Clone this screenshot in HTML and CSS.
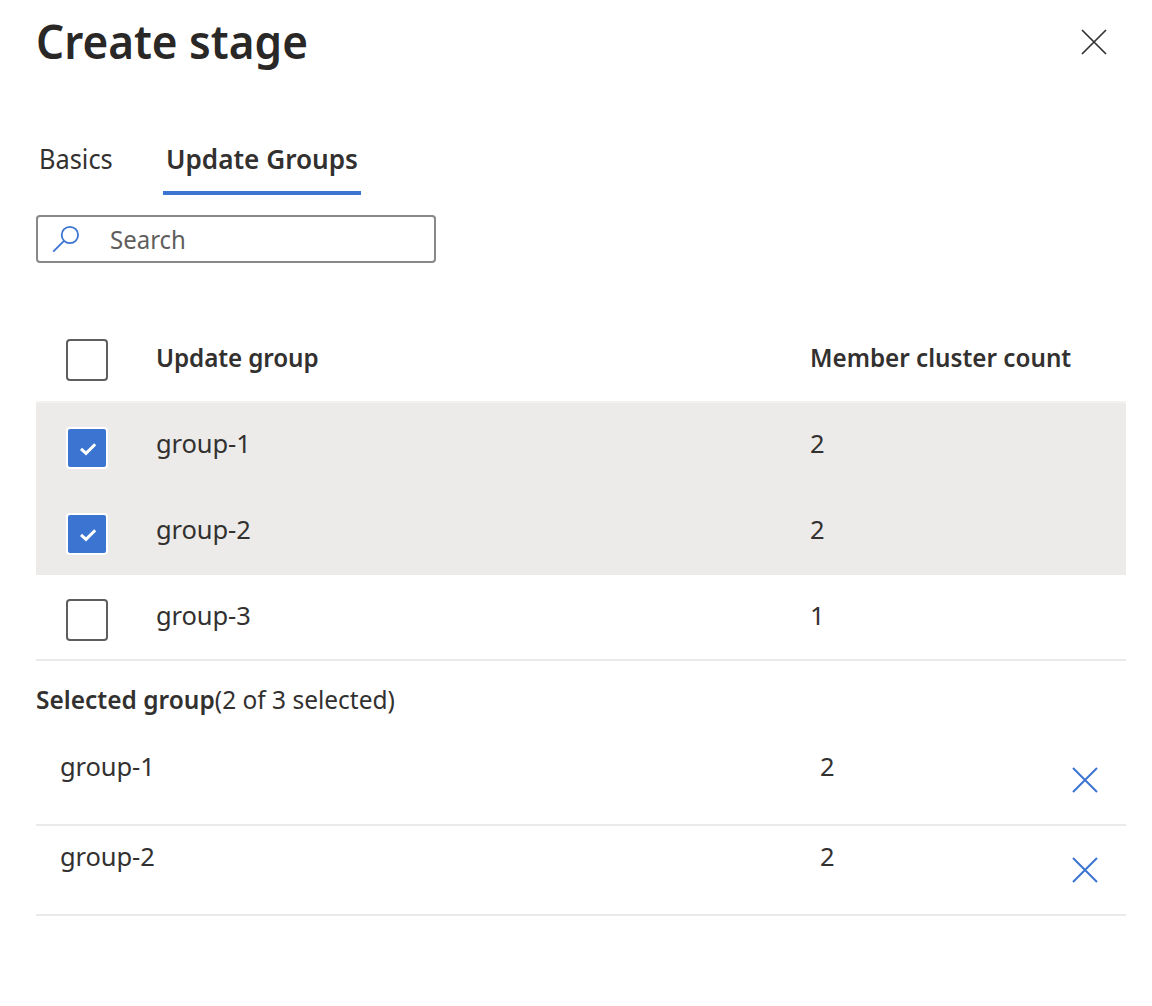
FILE: index.html
```html
<!DOCTYPE html>
<html lang="en">
<head>
<meta charset="utf-8">
<title>Create stage</title>
<link rel="stylesheet" href="styles.css">
</head>
<body>
<main class="panel">
  <header class="panel-header">
    <h1 class="title"><span class="fit fit-title">Create stage</span></h1>
    <button class="icon-button close" aria-label="Close"><svg class="cross" viewBox="0 0 26 26"><path d="M1 1L25 25M25 1L1 25"/></svg></button>
  </header>
  <nav class="tabs">
    <a class="tab"><span class="fit fit-basics">Basics</span></a>
    <a class="tab active"><span class="fit fit-strong">Update Groups</span></a>
  </nav>
  <div class="search">
    <svg class="search-icon" viewBox="0 0 28 28"><circle cx="17.9" cy="10" r="8.2"/><path d="M12 15.8L1.2 26.6"/></svg>
    <span class="fit fit-search">Search</span>
  </div>
  <section class="table">
    <div class="row head">
      <span class="checkbox"></span>
      <span class="name"><span class="fit fit-strong">Update group</span></span>
      <span class="count"><span class="fit fit-strong">Member cluster count</span></span>
    </div>
    <div class="row selected">
      <span class="checkbox checked"><svg class="tick" viewBox="0 0 18 14"><path d="M2 6.8L7 11.4L16.2 2.2"/></svg></span>
      <span class="name">group-1</span>
      <span class="count">2</span>
    </div>
    <div class="row selected">
      <span class="checkbox checked"><svg class="tick" viewBox="0 0 18 14"><path d="M2 6.8L7 11.4L16.2 2.2"/></svg></span>
      <span class="name">group-2</span>
      <span class="count">2</span>
    </div>
    <div class="row last">
      <span class="checkbox"></span>
      <span class="name">group-3</span>
      <span class="count">1</span>
    </div>
  </section>
  <h2 class="summary"><span class="fit fit-summary"><strong>Selected group</strong>(2 of 3 selected)</span></h2>
  <section class="picked">
    <div class="picked-row">
      <span class="name">group-1</span>
      <span class="count">2</span>
      <button class="icon-button remove" aria-label="Remove group-1"><svg class="cross" viewBox="0 0 26 26"><path d="M1 1L25 25M25 1L1 25"/></svg></button>
    </div>
    <div class="picked-row">
      <span class="name">group-2</span>
      <span class="count">2</span>
      <button class="icon-button remove" aria-label="Remove group-2"><svg class="cross" viewBox="0 0 26 26"><path d="M1 1L25 25M25 1L1 25"/></svg></button>
    </div>
  </section>
</main>
</body>
</html>
```
FILE: styles.css
```css
* { box-sizing: border-box; }
body {
  margin: 0;
  background: #fff;
  color: #323130;
  font: 400 25.5px/36px "Noto Sans", "Open Sans", sans-serif;
}
strong { font-weight: 600; }
.panel { width: 1152px; height: 1006px; padding: 0 26px 0 36px; overflow: hidden; }
.panel-header { display: flex; justify-content: space-between; height: 139px; }
.title {
  margin: 9px 0 0;
  font-size: 47px;
  line-height: 64px;
  font-weight: 600;
  color: #292827;
  white-space: nowrap;
}
/* Slightly narrowed lettering for headings and labels */
.fit { display: inline-block; transform-origin: 0 50%; white-space: nowrap; }
.fit-title { transform: scaleX(.938); }
.fit-basics { transform: scaleX(.922); }
.fit-strong { transform: scaleX(.95); }
.fit-search { transform: scaleX(.94); }
.fit-summary { transform: scaleX(.96); }
.icon-button { padding: 0; border: 0; background: none; width: 26px; height: 26px; }
.cross { display: block; width: 26px; height: 26px; fill: none; stroke: currentColor; stroke-width: 1.7; }
.close { margin: 29px 19px 0 0; color: #323130; }
.remove .cross { stroke-width: 2; }
.tabs { display: flex; gap: 48px; height: 56px; font-size: 27.5px; line-height: 40px; }
.tab { padding: 0 3px; white-space: nowrap; }
.tab:first-child { width: 79px; }
.tab.active { width: 198px; border-bottom: 4px solid #3b74d1; font-weight: 600; }
.search {
  display: flex;
  width: 400px;
  height: 48px;
  margin-top: 20px;
  padding: 4px 14px;
  border: 2px solid #8a8886;
  border-radius: 4px;
  color: #605e5c;
}
.search-icon { width: 28px; height: 28px; margin: 4px 30px 0 0; fill: none; stroke: #3b74d1; stroke-width: 1.8; }
.table { margin-top: 54px; }
.row {
  display: grid;
  grid-template-columns: 42px 606px 1fr;
  column-gap: 48px;
  height: 86px;
  padding: 22px 0 0 30px;
  align-items: start;
}
.head { border-bottom: 2px solid #f3f2f1; font-weight: 600; }
.selected { background: #edebe9; }
.last { border-bottom: 2px solid #eaeaea; }
.name, .count { white-space: nowrap; }
.checkbox {
  display: flex;
  align-items: center;
  justify-content: center;
  width: 42px;
  height: 42px;
  margin-top: 2px;
  border: 2px solid #605e5c;
  border-radius: 4px;
  background: #fff;
}
.head .checkbox { margin-top: 0; }
.checked { border-color: #fff; background: #3b74d1; }
.tick { width: 18px; height: 14px; margin: 1px 0 0 2px; fill: none; stroke: #fff; stroke-width: 3; }
.summary { margin: 20px 0 19px; font-size: 25.5px; line-height: 36px; font-weight: 400; white-space: nowrap; }
.picked-row {
  display: grid;
  grid-template-columns: 712px 1fr 26px;
  column-gap: 48px;
  height: 90px;
  padding: 12px 28px 0 24px;
  border-bottom: 2px solid #eaeaea;
}
.remove { margin-top: 19px; color: #3b74d1; }
.name { letter-spacing: -.1px; }
```
